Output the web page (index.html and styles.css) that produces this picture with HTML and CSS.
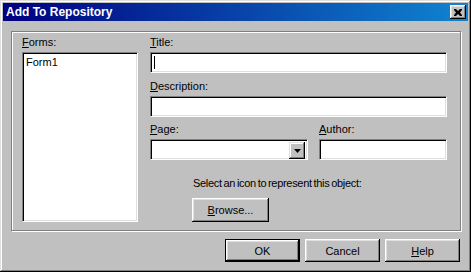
FILE: index.html
```html
<!DOCTYPE html>
<html lang="en">
<head>
    <meta charset="UTF-8">
    <title>Add To Repository</title>
    <link rel="stylesheet" href="styles.css">
</head>
<body>

<div class="dialog">
    <div class="titlebar">
        <span class="caption">Add To Repository</span>
        <button class="close-btn" aria-label="Close">
            <svg width="8" height="7" viewBox="0 0 8 7">
                <path d="M0 0h2l2 2 2-2h2v1l-2 2.5 2 2.5v1h-2l-2-2-2 2h-2v-1l2-2.5-2-2.5z" fill="#000"/>
            </svg>
        </button>
    </div>

    <div class="content">
        <div class="panel">
            <!-- list of forms -->
            <div class="forms-col">
                <label class="lbl"><u>F</u>orms:</label>
                <div class="listbox">
                    <div class="list-item">Form1</div>
                </div>
            </div>

            <!-- repository fields -->
            <div class="fields">
                <label class="lbl"><u>T</u>itle:</label>
                <div class="field field-title"><span class="caret"></span></div>

                <label class="lbl lbl-gap"><u>D</u>escription:</label>
                <div class="field"></div>

                <div class="row">
                    <div>
                        <label class="lbl"><u>P</u>age:</label>
                        <div class="field combo">
                            <span class="drop-btn">
                                <svg width="7" height="4" viewBox="0 0 7 4"><path d="M0 0h7l-3.5 4z" fill="#000"/></svg>
                            </span>
                        </div>
                    </div>
                    <div>
                        <label class="lbl"><u>A</u>uthor:</label>
                        <div class="field"></div>
                    </div>
                </div>

                <div class="icon-area">
                    <p class="hint">Select an icon to represent this object:</p>
                    <button class="btn btn-browse"><u>B</u>rowse...</button>
                </div>
            </div>
        </div>

        <div class="buttons">
            <button class="btn btn-default">OK</button>
            <button class="btn">Cancel</button>
            <button class="btn"><u>H</u>elp</button>
        </div>
    </div>
</div>

</body>
</html>
```

FILE: styles.css
```css
/* Classic Windows dialog */
* {
    box-sizing: border-box;
}

body {
    margin: 0;
    background: #c0c0c0;
    font-family: "Liberation Sans", Arial, sans-serif;
    font-size: 11px;
    color: #000;
}

.dialog {
    width: 471px;
    height: 272px;
    padding: 3px;
    background: #c0c0c0;
    box-shadow: inset -1px -1px #000, inset 1px 1px #dfdfdf,
                inset -2px -2px #808080, inset 2px 2px #fff;
}

/* Title bar */
.titlebar {
    height: 18px;
    display: flex;
    align-items: center;
    justify-content: space-between;
    padding: 0 2px 0 3px;
    background: linear-gradient(to right, #000080, #1084d0);
}

.caption {
    color: #fff;
    font-weight: bold;
    font-size: 12px;
}

.close-btn {
    width: 16px;
    height: 14px;
    padding: 0;
    display: flex;
    align-items: center;
    justify-content: center;
    background: #c0c0c0;
    border: none;
    box-shadow: inset -1px -1px #000, inset 1px 1px #fff,
                inset -2px -2px #808080, inset 2px 2px #dfdfdf;
}

/* Body */
.content {
    padding: 10px 7px 0 8px;
}

.panel {
    height: 200px;
    display: grid;
    grid-template-columns: 116px 1fr;
    column-gap: 12px;
    padding: 4px 13px 0 10px;
    border: 1px solid #808080;
    box-shadow: inset 1px 1px #fff, 1px 1px #fff;
}

.lbl {
    display: block;
    height: 13px;
    line-height: 13px;
    margin-bottom: 3px;
}

.lbl-gap {
    margin-top: 7px;
}

/* Sunken controls */
.listbox,
.field {
    background: #fff;
    border: 1px solid;
    border-color: #808080 #fff #fff #808080;
    box-shadow: inset 1px 1px #000, inset -1px -1px #dfdfdf;
}

.listbox {
    height: 170px;
    padding: 3px 3px;
}

.list-item {
    line-height: 13px;
}

.field {
    height: 21px;
    position: relative;
}

.caret {
    position: absolute;
    left: 3px;
    top: 3px;
    width: 1px;
    height: 13px;
    background: #000;
}

.row {
    display: grid;
    grid-template-columns: 158px 1fr;
    column-gap: 11px;
    margin-top: 6px;
}

.combo {
    display: flex;
    justify-content: flex-end;
    padding: 2px;
}

.drop-btn {
    width: 16px;
    height: 17px;
    display: flex;
    align-items: center;
    justify-content: center;
    background: #c0c0c0;
    box-shadow: inset -1px -1px #000, inset 1px 1px #dfdfdf,
                inset -2px -2px #808080, inset 2px 2px #fff;
}

.icon-area {
    padding-left: 42px;
    margin-top: 17px;
}

.hint {
    margin: 0 0 8px 1px;
    height: 13px;
    line-height: 13px;
    letter-spacing: -0.3px;
    word-spacing: -1px;
}

/* Raised buttons */
.btn {
    height: 23px;
    width: 75px;
    padding: 0;
    font-family: inherit;
    font-size: 11px;
    color: #000;
    background: #c0c0c0;
    border: none;
    box-shadow: inset -1px -1px #000, inset 1px 1px #fff,
                inset -2px -2px #808080, inset 2px 2px #dfdfdf;
}

.btn-browse {
    width: 77px;
    height: 24px;
}

.btn-default {
    box-shadow: inset 0 0 0 1px #000, inset -2px -2px #000, inset 2px 2px #fff,
                inset -3px -3px #808080, inset 3px 3px #dfdfdf;
}

.buttons {
    display: flex;
    justify-content: flex-end;
    gap: 5px;
    margin-top: 8px;
    padding-right: 1px;
}
```
